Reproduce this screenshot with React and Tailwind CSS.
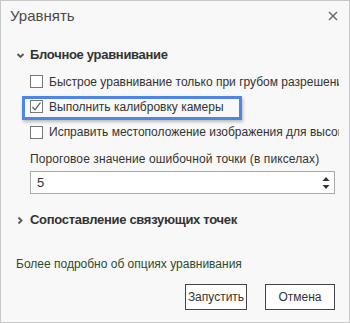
const Checkbox = ({ checked }) => (
  <span className="w-[13px] h-[13px] border border-[#777] bg-white flex items-center justify-center shrink-0">
    {checked && (
      <svg width="11" height="11" viewBox="0 0 11 11">
        <path d="M1.5 6 L4 8.8 L9.5 1.5" fill="none" stroke="#555" strokeWidth="1.2" />
      </svg>
    )}
  </span>
)

const App = () => {
  return (
    <div
      className="w-[350px] h-[323px] bg-[#f8f8f8] border border-[#c8c8c8] flex flex-col text-[#333] overflow-hidden"
      style={{ fontFamily: '"Liberation Sans", Arial, sans-serif' }}
    >
      <div className="flex items-center justify-between pl-[9px] pr-[11px] h-[30px]">
        <span className="text-[15px] text-[#4a4a4a]">Уравнять</span>
        <svg width="10" height="10" viewBox="0 0 10 10">
          <path d="M1 1 L9 9 M9 1 L1 9" stroke="#666" strokeWidth="1.4" />
        </svg>
      </div>

      <div className="flex items-center gap-[5px] pl-[15px] mt-[15px] h-[18px]">
        <svg width="9" height="9" viewBox="0 0 9 9">
          <path d="M1.5 3 L4.5 6 L7.5 3" fill="none" stroke="#555" strokeWidth="1.8" />
        </svg>
        <span className="text-[13px] font-bold text-[#333] tracking-[-0.3px]">Блочное уравнивание</span>
      </div>

      <div className="pl-[29px] pr-[10px] mt-[5px] flex flex-col text-[12px]">
        <div className="flex items-center gap-[6px] h-[25px] whitespace-nowrap overflow-hidden">
          <Checkbox />
          <span>Быстрое уравнивание только при грубом разрешении</span>
        </div>
        <div className="relative flex items-center gap-[6px] h-[25px] whitespace-nowrap">
          <div className="absolute left-[-8px] top-[2px] w-[220px] h-[24px] border-[3px] border-[#4f86e6] shadow-[1px_2px_3px_rgba(0,0,0,0.25)]" />
          <Checkbox checked />
          <span>Выполнить калибровку камеры</span>
        </div>
        <div className="flex items-center gap-[6px] h-[26px] whitespace-nowrap overflow-hidden">
          <Checkbox />
          <span>Исправить местоположение изображения для высокой точности</span>
        </div>
        <div className="mt-[4px] h-[20px] flex items-center whitespace-nowrap tracking-[0.1px]">
          Пороговое значение ошибочной точки (в пикселах)
        </div>
        <div className="mt-[2px] w-[305px] h-[23px] bg-white border border-[#aaa] flex items-center justify-between pl-[6px] pr-[4px]">
          <span className="text-[13px]">5</span>
          <svg width="8" height="14" viewBox="0 0 8 14">
            <path d="M0.5 5 L4 1 L7.5 5 Z M0.5 9 L4 13 L7.5 9 Z" fill="#333" />
          </svg>
        </div>
      </div>

      <div className="flex items-center gap-[6px] pl-[15px] mt-[17px] h-[18px]">
        <svg width="8" height="9" viewBox="0 0 8 9">
          <path d="M2.5 1.5 L5.5 4.5 L2.5 7.5" fill="none" stroke="#555" strokeWidth="1.8" />
        </svg>
        <span className="text-[13px] font-bold text-[#333] tracking-[-0.3px]">Сопоставление связующих точек</span>
      </div>

      <div className="pl-[15px] mt-[26px] text-[12px] text-[#2c4a2c] h-[18px] flex items-center">
        Более подробно об опциях уравнивания
      </div>

      <div className="flex justify-end gap-[18px] pr-[14px] mt-[11px] text-[12px]">
        <button className="w-[62px] h-[26px] border border-[#444] bg-white">Запустить</button>
        <button className="w-[70px] h-[26px] border border-[#444] bg-white">Отмена</button>
      </div>
    </div>
  )
}

export default App
